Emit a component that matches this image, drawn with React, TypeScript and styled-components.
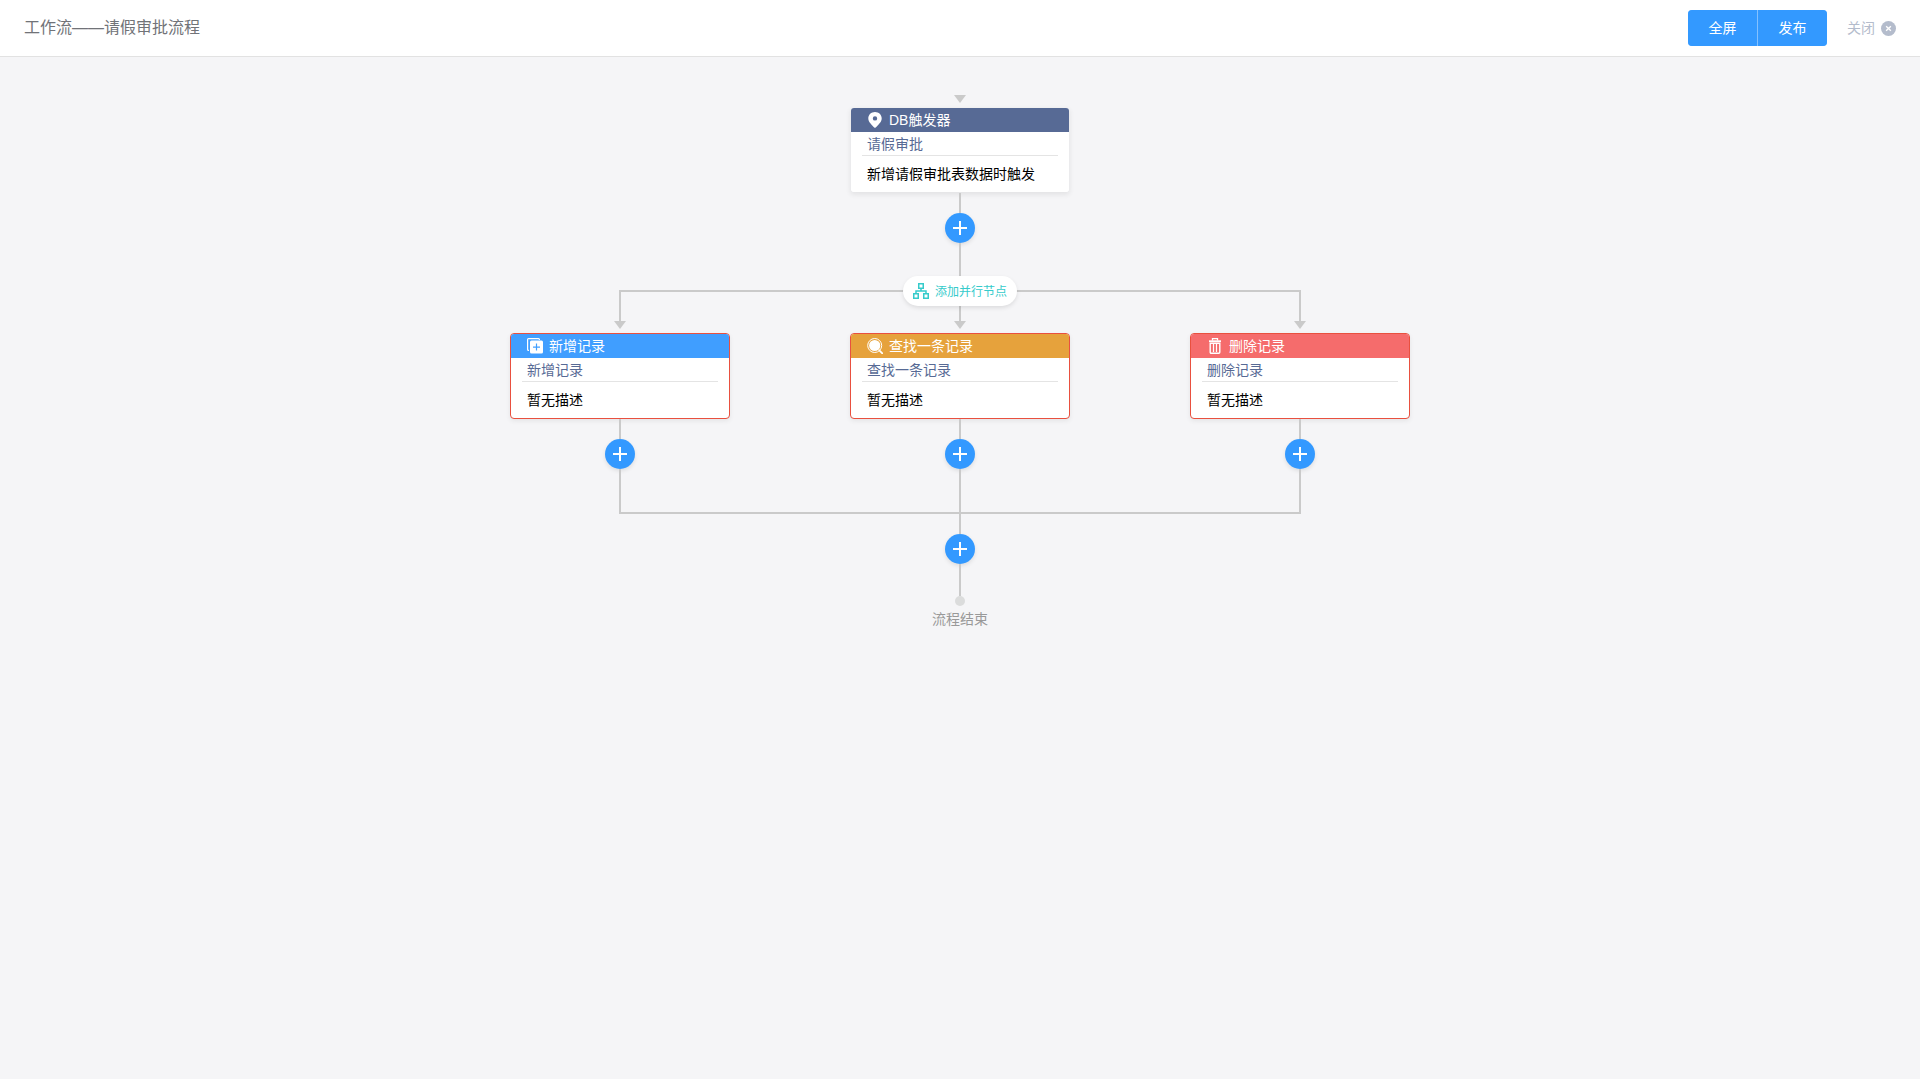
import React from 'react';
import styled, { createGlobalStyle } from 'styled-components';

const line = '#cacaca';
const primary = '#3399ff';

const GlobalStyle = createGlobalStyle`
  *, *::before, *::after { box-sizing: border-box; }
  body {
    margin: 0;
    background: #f5f5f7;
    font-family: "Liberation Sans", "Noto Sans CJK SC", sans-serif;
    font-size: 14px;
    font-weight: 400;
  }
  button { font: inherit; cursor: pointer; }
`;

const Page = styled.div`
  min-height: 100vh;
  display: flex;
  flex-direction: column;
`;

const TopBar = styled.header`
  display: flex;
  align-items: center;
  justify-content: space-between;
  padding: 10px 24px;
  background: #fff;
  border-bottom: 1px solid #e2e2e2;
`;

const Title = styled.h1`
  margin: 0;
  font-size: 16px;
  line-height: 24px;
  font-weight: inherit;
  color: #717378;
`;

const Actions = styled.div`
  display: flex;
  align-items: center;
  gap: 20px;
`;

const ButtonGroup = styled.div`
  display: flex;
  gap: 1px;
  border-radius: 4px;
  overflow: hidden;
  background: #84c1ff;
`;

const ActionButton = styled.button`
  width: 69px;
  height: 36px;
  padding: 0 0 2px;
  border: 0;
  background: ${primary};
  color: #fff;
`;

const CloseButton = styled.button`
  display: flex;
  align-items: center;
  gap: 6px;
  padding: 0;
  border: 0;
  background: none;
  color: #b4bccc;
  line-height: 20px;
`;

const Canvas = styled.main`
  flex: 1;
  display: flex;
  flex-direction: column;
  align-items: center;
  padding: 38px 24px;
`;

const Arrow = styled.div`
  margin-bottom: 4px;
  border: 6px solid transparent;
  border-top: 8px solid ${line};
  border-bottom: 0;
`;

const Line = styled.div<{ $length: number }>`
  width: 2px;
  height: ${p => p.$length}px;
  background: ${line};
`;

const Card = styled.article<{ $alert?: boolean }>`
  width: 220px;
  border: 1px solid ${p => (p.$alert ? '#e9503f' : 'transparent')};
  border-radius: 4px;
  background: #fff;
  background-clip: padding-box;
  box-shadow: 0 2px 5px rgba(0, 0, 0, 0.07);
`;

const CardHeader = styled.h2<{ $color: string }>`
  display: flex;
  align-items: center;
  gap: 6px;
  height: 24px;
  margin: 0;
  padding: 0 16px;
  border-radius: 3px 3px 0 0;
  background: ${p => p.$color};
  color: #fff;
  font-size: 14px;
  font-weight: inherit;
`;

const Label = styled.span`
  padding-bottom: 2px;
`;

const CardName = styled.div`
  margin: 0 11px;
  padding: 2px 5px 0;
  border-bottom: 1px solid #e4e4e4;
  color: #576a95;
  line-height: 21px;
`;

const CardText = styled.p`
  margin: 0;
  padding: 0 16px;
  color: #000;
  line-height: 36px;
`;

const AddButton = styled.button`
  display: flex;
  align-items: center;
  justify-content: center;
  width: 30px;
  height: 30px;
  padding: 0;
  border: 0;
  border-radius: 50%;
  background: ${primary};
  color: #fff;
  box-shadow: 0 2px 4px rgba(0, 0, 0, 0.1);
`;

const Split = styled.section`
  position: relative;
  display: flex;
`;

const ParallelButton = styled.button`
  position: absolute;
  top: 1px;
  left: 50%;
  transform: translate(-50%, -50%);
  display: flex;
  align-items: center;
  gap: 6px;
  height: 30px;
  padding: 0 10px;
  border: 0;
  border-radius: 15px;
  background: #fff;
  color: #36cbcb;
  font-size: 12px;
  white-space: nowrap;
  box-shadow: 0 2px 4px rgba(0, 0, 0, 0.1);
`;

const Branch = styled.div`
  display: flex;
  flex-direction: column;
  align-items: center;
  width: 340px;
`;

const Rail = styled.div`
  display: flex;
  align-self: stretch;
  height: 2px;
`;

const RailHalf = styled.div<{ $on: boolean }>`
  flex: 1;
  background: ${p => (p.$on ? line : 'transparent')};
`;

const EndDot = styled.div`
  width: 10px;
  height: 10px;
  border-radius: 50%;
  background: #dbdcdc;
`;

const EndLabel = styled.p`
  margin: 3px 0 0;
  color: #999;
  line-height: 20px;
`;

const PinIcon = () => (
  <svg width="16" height="16" viewBox="0 0 16 16" fill="currentColor" aria-hidden="true">
    <path
      fillRule="evenodd"
      d="M8 0C4.200 0 1.300 2.800 1.300 6.400c0 3.400 3.300 6.400 6.700 9.600 3.400-3.200 6.700-6.200 6.700-9.600C14.700 2.800 11.800 0 8 0Zm0 4.200a2.200 2.200 0 1 1 0 4.400 2.200 2.200 0 0 1 0-4.400Z"
    />
  </svg>
);

const AddRecordIcon = () => (
  <svg width="16" height="16" viewBox="0 0 16 16" fill="currentColor" aria-hidden="true">
    <path d="M1.500 0H11.500a1.500 1.500 0 0 1 1.500 1.500V2H11.800V1.200H1.200V11.800H2V13H1.500A1.500 1.500 0 0 1 0 11.500V1.500A1.500 1.500 0 0 1 1.500 0Z" />
    <path
      fillRule="evenodd"
      d="M4.500 2.500h10A1.500 1.500 0 0 1 16 4v10a1.500 1.500 0 0 1-1.500 1.500h-10A1.500 1.500 0 0 1 3 14V4A1.500 1.500 0 0 1 4.500 2.500Zm4.400 3.100v2.900H6v1.200h2.900v2.900h1.200V9.700H13V8.500h-2.900V5.600Z"
    />
  </svg>
);

const SearchIcon = () => (
  <svg width="16" height="16" viewBox="0 0 16 16" fill="none" stroke="currentColor" aria-hidden="true">
    <circle cx="7.700" cy="7.500" r="7" />
    <circle cx="7.700" cy="7.500" r="5.600" fill="currentColor" stroke="none" />
    <path d="M12.300 12.300 15.300 15.300" strokeWidth="1.800" strokeLinecap="round" />
  </svg>
);

const TrashIcon = () => (
  <svg width="16" height="16" viewBox="0 0 16 16" fill="none" stroke="currentColor" aria-hidden="true">
    <path d="M5.500 2.500V.700h5v1.800" strokeWidth="1.300" />
    <path d="M2 3.200h12" strokeWidth="1.800" />
    <path d="M3.200 5.200h9.600V14.200a1 1 0 0 1-1 1H4.200a1 1 0 0 1-1-1Z" strokeWidth="1.400" />
    <path d="M6.500 6v8M9.500 6v8" strokeWidth="1.200" />
  </svg>
);

const ParallelIcon = () => (
  <svg width="16" height="16" viewBox="0 0 16 16" fill="none" stroke="currentColor" strokeWidth="1.500" aria-hidden="true">
    <rect x="5.750" y="0.750" width="4.500" height="4.500" />
    <rect x="0.750" y="10.750" width="4.500" height="4.500" />
    <rect x="10.750" y="10.750" width="4.500" height="4.500" />
    <path d="M8 5.500V8M3 10.500V8H13V10.500" />
  </svg>
);

const PlusIcon = () => (
  <svg width="14" height="14" viewBox="0 0 14 14" stroke="currentColor" strokeWidth="2" aria-hidden="true">
    <path d="M7 0V14M0 7H14" />
  </svg>
);

const CloseIcon = () => (
  <svg width="15" height="15" viewBox="0 0 14 14" aria-hidden="true">
    <circle cx="7" cy="7" r="7" fill="currentColor" />
    <path d="M4.800 4.800 9.200 9.200M9.200 4.800 4.800 9.200" stroke="#fff" strokeWidth="1.300" />
  </svg>
);

interface NodeProps {
  icon: React.ReactNode;
  color: string;
  type: string;
  name: string;
  text: string;
  alert?: boolean;
}

const branches: NodeProps[] = [
  { icon: <AddRecordIcon />, color: '#409eff', type: '新增记录', name: '新增记录', text: '暂无描述', alert: true },
  { icon: <SearchIcon />, color: '#e6a23c', type: '查找一条记录', name: '查找一条记录', text: '暂无描述', alert: true },
  { icon: <TrashIcon />, color: '#f56c6c', type: '删除记录', name: '删除记录', text: '暂无描述', alert: true },
];

// An arrow, the card it points at, and the button that appends the next step.
const FlowNode = ({ icon, color, type, name, text, alert }: NodeProps) => (
  <>
    <Arrow />
    <Card $alert={alert}>
      <CardHeader $color={color}>
        {icon}
        <Label>{type}</Label>
      </CardHeader>
      <CardName>{name}</CardName>
      <CardText>{text}</CardText>
    </Card>
    <AddStep />
  </>
);

const AddStep = () => (
  <>
    <Line $length={20} />
    <AddButton type="button" aria-label="添加节点">
      <PlusIcon />
    </AddButton>
  </>
);

const BranchRail = ({ index }: { index: number }) => (
  <Rail>
    <RailHalf $on={index > 0} />
    <Line $length={2} />
    <RailHalf $on={index < branches.length - 1} />
  </Rail>
);

export default function App() {
  return (
    <Page>
      <GlobalStyle />
      <TopBar>
        <Title>工作流——请假审批流程</Title>
        <Actions>
          <ButtonGroup>
            <ActionButton type="button">全屏</ActionButton>
            <ActionButton type="button">发布</ActionButton>
          </ButtonGroup>
          <CloseButton type="button">
            关闭
            <CloseIcon />
          </CloseButton>
        </Actions>
      </TopBar>
      <Canvas>
        <FlowNode
          icon={<PinIcon />}
          color="#576a95"
          type="DB触发器"
          name="请假审批"
          text="新增请假审批表数据时触发"
        />
        <Line $length={47} />
        <Split>
          {branches.map((node, index) => (
            <Branch key={node.type}>
              <BranchRail index={index} />
              <Line $length={29} />
              <FlowNode {...node} />
              <Line $length={43} />
              <BranchRail index={index} />
            </Branch>
          ))}
          <ParallelButton type="button">
            <ParallelIcon />
            <Label>添加并行节点</Label>
          </ParallelButton>
        </Split>
        <AddStep />
        <Line $length={32} />
        <EndDot />
        <EndLabel>流程结束</EndLabel>
      </Canvas>
    </Page>
  );
}
